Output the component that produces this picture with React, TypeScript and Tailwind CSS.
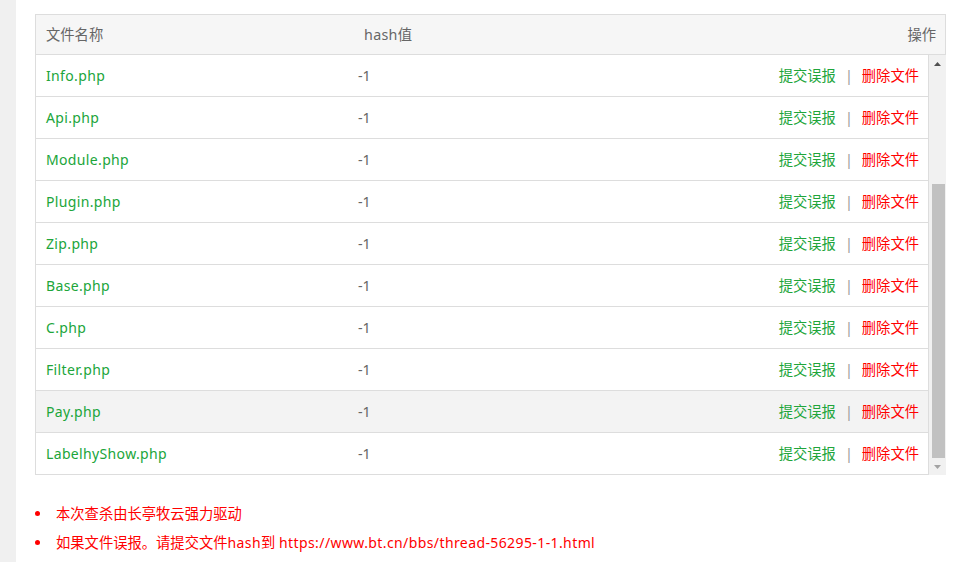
import { Fragment } from 'react'

const FILES = [
  'Info.php',
  'Api.php',
  'Module.php',
  'Plugin.php',
  'Zip.php',
  'Base.php',
  'C.php',
  'Filter.php',
  'Pay.php',
  'LabelhyShow.php',
]

// row that shows the hover tint in the screenshot
const HOVER_ROW = 'Pay.php'

function ScrollBar() {
  // drawn by hand so the headless browser's native bar doesn't change the look
  return (
    <div className="flex h-[420px] w-[17px] flex-col bg-[#f1f1f1]">
      <div className="flex h-[17px] items-center justify-center">
        <svg width="7" height="4" viewBox="0 0 7 4">
          <path d="M0 4 L3.5 0 L7 4 Z" fill="#505050" />
        </svg>
      </div>
      <div className="flex-1 pl-[3px] pr-[1px]">
        <div className="mt-[112px] h-[274px] w-full bg-[#c1c1c1]" />
      </div>
      <div className="flex h-[17px] items-center justify-center">
        <svg width="7" height="4" viewBox="0 0 7 4">
          <path d="M0 0 L7 0 L3.5 4 Z" fill="#a3a3a3" />
        </svg>
      </div>
    </div>
  )
}

export default function App() {
  return (
    <div className="flex h-[562px] w-[955px] bg-white font-['Noto_Sans','Noto_Sans_CJK_SC',sans-serif] text-[14.3px]">
      <div className="h-full w-[16px] bg-[#f0f0f0]" />

      <div className="pl-[19px] pt-[14px]">
        <section className="w-[911px]">
          <header className="flex h-[41px] items-center border border-[#ddd] bg-[#f6f6f6] text-[#666]">
            <span className="w-[328px] pl-[10px]">文件名称</span>
            <span className="flex-1 tracking-[0.3px]">hash值</span>
            <span className="pr-[9px]">操作</span>
          </header>

          <div className="flex">
            <ul className="w-[894px] border-x border-[#ddd]">
              {FILES.map((name) => (
                <li
                  key={name}
                  className={
                    'flex h-[42px] items-center border-b border-[#ddd] ' +
                    (name === HOVER_ROW ? 'bg-[#f3f3f3]' : 'bg-white')
                  }
                >
                  <span className="w-[322px] pl-[10px] text-[14px] tracking-[0.35px] text-[#20a53a]">
                    {name}
                  </span>
                  <span className="flex-1 text-[#666]">-1</span>
                  <span className="flex items-center pr-[9px]">
                    <span className="text-[#20a53a]">提交误报</span>
                    <span className="px-[9px] text-[#999]">|</span>
                    <span className="text-[#f00]">删除文件</span>
                  </span>
                </li>
              ))}
            </ul>
            <ScrollBar />
          </div>
        </section>

        <ul className="mt-[24px] text-[#f00]">
          <li className="flex h-[29px] items-center">
            <span className="mr-[16px] h-[5px] w-[5px] rounded-full bg-[#f00]" />
            <span>本次查杀由长亭牧云强力驱动</span>
          </li>
          <li className="flex h-[29px] items-center">
            <span className="mr-[16px] h-[5px] w-[5px] rounded-full bg-[#f00]" />
            <span>
              <Fragment>如果文件误报。请提交文件</Fragment>
              <span className="text-[14px] tracking-[0.4px]">hash</span>
              <Fragment>到 </Fragment>
              <span className="text-[14px] tracking-[0.4px]">
                https://www.bt.cn/bbs/thread-56295-1-1.html
              </span>
            </span>
          </li>
        </ul>
      </div>
    </div>
  )
}
